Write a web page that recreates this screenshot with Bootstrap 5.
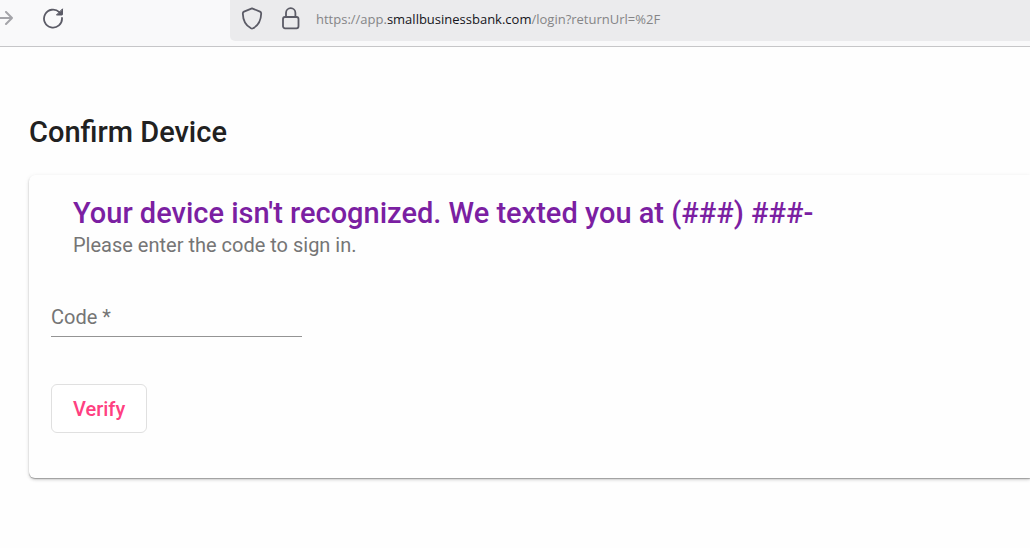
<!DOCTYPE html>
<html lang="en">
<head>
<meta charset="utf-8">
<meta name="viewport" content="width=device-width, initial-scale=1">
<title>Confirm Device</title>
<link href="https://cdn.jsdelivr.net/npm/bootstrap@5.3.0/dist/css/bootstrap.min.css" rel="stylesheet">
<style>
  body { font-family: Roboto, "Liberation Sans", sans-serif; background: #fefefe; color: #212121; }
  .toolbar { height: 47px; background: #f9f9fa; border-bottom: 1px solid #c6c6c8; color: #5b5b66; }
  .toolbar svg { display: block; }
  .nav-tools { width: 230px; padding-top: 7px; gap: 28px; }
  .address-bar { height: 41px; padding: 0 10px 4px; gap: 16px; background: #ebebed; border-radius: 0 0 0 5px; }
  .address { font-family: "Open Sans", "Noto Sans", sans-serif; font-size: 13px; line-height: 20px; color: #858587; white-space: nowrap; }
  .address strong { font-weight: 400; color: #15141a; }
  main { padding: 68px 0 48px 29px; }
  .page-title, .notice { font-size: 29px; line-height: 34px; font-weight: 500; margin: 0; }
  .page-title { margin-bottom: 26px; }
  .panel { background: #fefefe; border-radius: 6px 0 0 6px; padding: 21px 22px 45px; box-shadow: 0 1px 1px rgba(0,0,0,.28), 0 2px 3px rgba(0,0,0,.12), 0 1px 5px rgba(0,0,0,.08); }
  .panel-heading { padding: 0 22px; }
  .notice { color: #7b1fa2; }
  .hint { font-size: 20px; line-height: 30px; color: #757575; margin: 0; }
  .code-field { width: 251px; height: 37px; margin-top: 40px; border-bottom: 1px solid #949494; font-size: 20px; line-height: 34px; color: #757575; }
  .code-field input { min-width: 0; background: none; outline: 0; }
  .verify { margin-top: 47px; padding: 0 21px; height: 49px; font-size: 20px; font-weight: 500; color: #ff4081; background: #fff; border: 1px solid #e0e0e0; border-radius: 6px; }
</style>
</head>
<body>
<header class="toolbar d-flex align-items-start">
  <nav class="nav-tools d-flex flex-shrink-0" aria-label="Navigation">
    <button class="btn p-0 border-0" aria-label="Forward" disabled>
      <svg width="14" height="22" viewBox="0 0 14 22" fill="none" stroke="#78787f" stroke-width="2" stroke-linecap="round" stroke-linejoin="round"><path d="M-3 11H12M6 5l6 6-6 6"/></svg>
    </button>
    <button class="btn p-0 border-0" aria-label="Reload">
      <svg width="22" height="22" viewBox="0 0 22 22" fill="none" stroke="#5b5b66" stroke-width="1.8" stroke-linecap="round"><path d="M17.3 5.2A9 9 0 1 0 20 11"/><path d="M20.5 2.2v5.300a.5.5 0 0 1-.5.5h-5.200z" fill="#5b5b66" stroke="#5b5b66" stroke-width="1"/></svg>
    </button>
  </nav>
  <div class="address-bar d-flex align-items-center flex-grow-1">
    <svg class="flex-shrink-0" width="24" height="24" viewBox="0 0 24 24" fill="none" stroke="#5b5b66" stroke-width="1.8" stroke-linejoin="round"><path d="M12 1.300l8 3.300q1.200.6 1.200 1.800C21 13.600 18 18.600 13 21.300q-1 .5-2 0C6 18.600 3 13.600 2.800 6.400q0-1.200 1.200-1.800z"/></svg>
    <svg class="flex-shrink-0" width="20" height="24" viewBox="1 0 20 24" fill="none" stroke="#5b5b66" stroke-width="1.8"><rect x="4" y="10" width="15.5" height="11.300" rx="2"/><path d="M7 10V5.900a4.700 4.700 0 0 1 9.400 0V10"/></svg>
    <div class="address">https://app.<strong>smallbusinessbank.com</strong>/login?returnUrl=%2F</div>
  </div>
</header>
<main>
  <h1 class="page-title">Confirm Device</h1>
  <section class="panel">
    <div class="panel-heading">
      <h2 class="notice">Your device isn't recognized. We texted you at (###) ###-</h2>
      <p class="hint">Please enter the code to sign in.</p>
    </div>
    <form>
      <div class="code-field d-flex">
        <label for="code" class="flex-shrink-0">Code *</label>
        <input id="code" type="text" class="border-0 flex-grow-1" autocomplete="one-time-code" required>
      </div>
      <button type="button" class="verify">Verify</button>
    </form>
  </section>
</main>
<script src="https://cdn.jsdelivr.net/npm/bootstrap@5.3.0/dist/js/bootstrap.bundle.min.js"></script>
</body>
</html>
